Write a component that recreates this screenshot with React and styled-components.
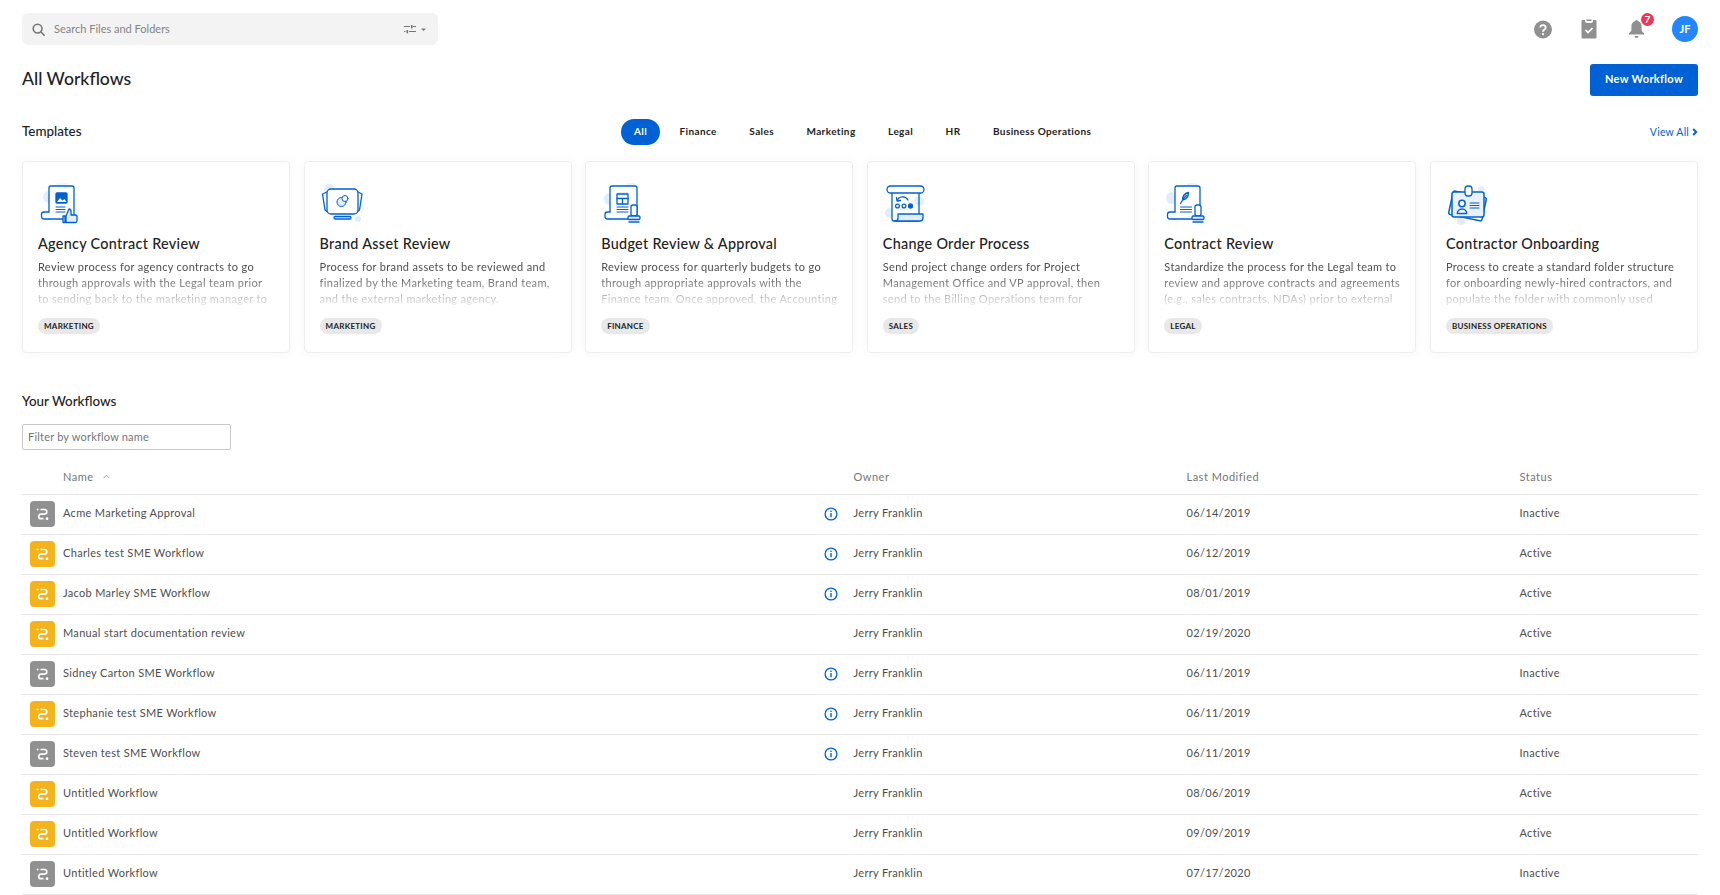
import React from 'react';
import styled, { createGlobalStyle } from 'styled-components';

const BLUE = '#0061d5';
const SPOT = '#e3edf9';

const GlobalStyle = createGlobalStyle`
  html, body {
    margin: 0;
    height: 895px;
    overflow: hidden;
    background: #fff;
    font-family: Lato, "Open Sans", sans-serif;
    color: #222;
  }
  * { box-sizing: border-box; }
`;

const Page = styled.div`
  padding: 13px 22px 0;
`;

const TopBar = styled.div`
  display: flex;
  justify-content: space-between;
  align-items: flex-start;
  height: 32px;
`;

const SearchBox = styled.div`
  display: flex;
  align-items: center;
  width: 416px;
  height: 32px;
  padding: 0 11px 0 10px;
  background: #f3f3f3;
  border-radius: 6px;
`;

const SearchText = styled.span`
  flex: 1;
  margin-left: 9px;
  padding-bottom: 1px;
  font-size: 11px;
  color: #848484;
`;

const TopIcons = styled.div`
  display: flex;
  align-items: center;
  height: 32px;
`;

const IconSlot = styled.div`
  position: relative;
  display: flex;
  justify-content: center;
  width: ${p => p.$w}px;
  margin-left: ${p => p.$gap || 0}px;
`;

const Badge = styled.span`
  position: absolute;
  top: -6px;
  right: -5px;
  width: 13px;
  height: 13px;
  border-radius: 50%;
  background: #ed3757;
  color: #fff;
  font-size: 10px;
  font-weight: 700;
  line-height: 13px;
  text-align: center;
`;

const Avatar = styled.div`
  width: 26px;
  height: 26px;
  margin-left: 23px;
  border-radius: 50%;
  background: #2486fc;
  color: #fff;
  font-size: 11px;
  font-weight: 700;
  line-height: 26px;
  text-align: center;
`;

const TitleRow = styled.div`
  display: flex;
  justify-content: space-between;
  align-items: center;
  margin-top: 19px;
`;

const Title = styled.h1`
  margin: 0;
  padding-bottom: 3px;
  font-size: 17.6px;
  font-weight: 500;
  color: #222;
`;

const PrimaryButton = styled.button`
  width: 108px;
  height: 32px;
  padding: 0 0 3px;
  border: 0;
  border-radius: 3px;
  background: ${BLUE};
  color: #fff;
  font-family: inherit;
  font-size: 11px;
  font-weight: 700;
  letter-spacing: 0.33px;
`;

const TemplatesBar = styled.div`
  display: grid;
  grid-template-columns: 599px 1fr auto;
  align-items: center;
  height: 26px;
  margin-top: 23px;
`;

const SectionTitle = styled.h2`
  margin: 0;
  font-size: 13.4px;
  font-weight: 500;
  color: #222;
`;

const TemplatesTitle = styled(SectionTitle)`
  padding-bottom: 3px;
`;

const Tabs = styled.div`
  display: flex;
  gap: 6.5px;
`;

const Tab = styled.div`
  height: 26px;
  padding: 0 13px;
  border-radius: 13px;
  background: ${p => (p.$active ? BLUE : 'transparent')};
  color: ${p => (p.$active ? '#fff' : '#222')};
  font-size: 10px;
  font-weight: 700;
  letter-spacing: 0.38px;
  line-height: 25px;
`;

const ViewAll = styled.a`
  display: flex;
  align-items: center;
  gap: 3px;
  padding-bottom: 1px;
  color: ${BLUE};
  font-size: 10.5px;
  letter-spacing: 0.2px;
`;

const CardGrid = styled.div`
  display: grid;
  grid-template-columns: repeat(6, 1fr);
  gap: 13.5px;
  margin-top: 16px;
`;

const Card = styled.div`
  height: 192px;
  padding: 21px 15px 0;
  background: #fff;
  border: 1px solid #eee;
  border-radius: 4px;
  box-shadow: 0 0 12px rgba(0, 0, 0, 0.04);
`;

const CardTitle = styled.div`
  margin-top: 9px;
  font-size: 14.4px;
  font-weight: 500;
  letter-spacing: 0.3px;
  line-height: 20px;
  color: #222;
  white-space: nowrap;
`;

const CardText = styled.div`
  height: 48px;
  margin-top: 5px;
  overflow: hidden;
  font-size: 11px;
  letter-spacing: 0.33px;
  line-height: 16px;
  color: #4e4e4e;
  -webkit-mask-image: linear-gradient(to bottom, #000 30%, rgba(0, 0, 0, 0.15) 95%);
  mask-image: linear-gradient(to bottom, #000 30%, rgba(0, 0, 0, 0.15) 95%);
`;

const Tag = styled.span`
  display: inline-block;
  height: 16px;
  margin-top: 11px;
  padding: 0 6px;
  border-radius: 8px;
  background: #e8e8e8;
  font-size: 8px;
  font-weight: 700;
  letter-spacing: 0.27px;
  line-height: 16px;
  color: #222;
`;

const YourTitle = styled(SectionTitle)`
  margin-top: 39px;
  line-height: 18px;
`;

const FilterInput = styled.input`
  display: block;
  width: 209px;
  height: 26px;
  margin: 14px 0 0;
  padding: 0 5px 1px;
  border: 1px solid #c9c9c9;
  border-radius: 2px;
  font-family: inherit;
  font-size: 11px;
  letter-spacing: 0.2px;
  &::placeholder {
    color: #767676;
    opacity: 1;
  }
`;

const Row = styled.div`
  display: grid;
  grid-template-columns: 41px 790.5px 333px 333px 1fr;
  align-items: center;
  height: 40px;
  padding-bottom: 1px;
  border-bottom: 1px solid #e8e8e8;
  font-size: 11px;
  letter-spacing: 0.32px;
  color: #4e4e4e;
`;

const HeadRow = styled(Row)`
  height: 45px;
  padding: 10px 0 1px;
  letter-spacing: 0.5px;
  color: #767676;
`;

const IconCell = styled.div`
  display: flex;
  padding-left: 8px;
`;

const NameCell = styled.div`
  display: flex;
  justify-content: space-between;
  align-items: center;
  padding-right: 16px;
`;

const CellText = styled.span`
  padding-bottom: 3px;
`;

const SortLabel = styled.span`
  display: flex;
  align-items: center;
  gap: 9px;
`;

const WorkflowBadge = styled.div`
  display: flex;
  align-items: center;
  justify-content: center;
  width: 25px;
  height: 26px;
  border-radius: 4px;
  background: ${p => (p.$active ? '#f5b31b' : '#909090')};
`;

/* ---------- drawings ---------- */

const SearchIcon = () => (
  <svg width="13" height="13" viewBox="0 0 13 13" fill="none" stroke="#767676" strokeWidth="1.6">
    <circle cx="5.6" cy="5.6" r="4.4" />
    <path d="M8.8 8.8l3.4 3.4" strokeLinecap="round" />
  </svg>
);

const FilterIcon = () => (
  <svg width="23" height="9" viewBox="0 0 23 9" fill="#777">
    <path d="M0 1h6v1H0zM9 1h3v1H9zM0 6h1.5v1H0zM5 6h7v1H5z" />
    <rect x="7" y="0" width="1.6" height="3.4" />
    <rect x="2.5" y="5" width="1.6" height="3.4" />
    <path d="M17 3.5h5l-2.5 2.5z" />
  </svg>
);

const HelpIcon = () => (
  <svg width="19" height="19" viewBox="0 0 18 18">
    <circle cx="9" cy="9" r="9" fill="#909090" />
    <path d="M6.3 7a2.7 2.4 0 1 1 4.2 2c-1 .7-1.5 1-1.5 2.2" fill="none" stroke="#fff" strokeWidth="1.9" />
    <circle cx="9" cy="13.7" r="1.15" fill="#fff" />
  </svg>
);

const ClipboardIcon = () => (
  <svg width="16" height="20" viewBox="0 0 16 20">
    <path d="M1.5 1H4v1a2 2 0 0 0 2 2h4a2 2 0 0 0 2-2V1h2.500a1 1 0 0 1 1 1v16.500a1 1 0 0 1-1 1h-13a1 1 0 0 1-1-1V2a1 1 0 0 1 1-1z" fill="#909090" />
    <path d="M5.500 0.500h5v1.500h-5z" fill="#909090" />
    <path d="M4.500 11l2.500 2.500 4.500-4.500" fill="none" stroke="#fff" strokeWidth="1.7" />
  </svg>
);

const BellIcon = () => (
  <svg width="17" height="20" viewBox="0 0 17 20" fill="#909090">
    <path d="M8.500 1a1.200 1.200 0 0 1 1.200 1.100c2.600.6 3.900 2.800 3.900 5.400v3.300c0 1.200.9 2.300 2.400 3.500v1.200H1v-1.200c1.500-1.200 2.400-2.300 2.400-3.500V7.500c0-2.600 1.300-4.800 3.900-5.400A1.200 1.200 0 0 1 8.500 1z" />
    <path d="M6.500 17h4a2 2 0 0 1-4 0z" />
  </svg>
);

const ChevronRight = () => (
  <svg width="6" height="8" viewBox="0 0 6 8" fill="none" stroke={BLUE} strokeWidth="2">
    <path d="M1.200 1l3 3-3 3" />
  </svg>
);

const SortCaret = () => (
  <svg width="7" height="5" viewBox="0 0 7 5" fill="none" stroke="#999" strokeWidth="1">
    <path d="M.7 4l2.800-2.800L6.300 4" />
  </svg>
);

const InfoIcon = () => (
  <svg width="14" height="14" viewBox="0 0 14 14">
    <circle cx="7" cy="7" r="5.900" fill="none" stroke={BLUE} strokeWidth="1.300" />
    <rect x="6.300" y="6" width="1.400" height="4.200" fill={BLUE} />
    <rect x="6.300" y="3.600" width="1.400" height="1.400" fill={BLUE} />
  </svg>
);

const WorkflowIcon = () => (
  <svg width="25" height="26" viewBox="0 0 25 26" fill="none" stroke="#fff" strokeWidth="1.700">
    <path d="M10.500 8.500h4a2.300 2.300 0 0 1 0 4.600h-3.500a2.300 2.300 0 0 0 0 4.600h2.500" />
    <circle cx="7.600" cy="8.500" r="1" fill="#fff" stroke="none" />
    <circle cx="17" cy="17.700" r="1.400" fill="#fff" stroke="none" />
  </svg>
);

const IconSvg = styled.svg`
  display: block;
`;

const Art = ({ children }) => (
  <IconSvg width="44" height="42" viewBox="0 0 44 42" fill="none" stroke={BLUE} strokeWidth="1.300" strokeLinejoin="round" strokeLinecap="round">
    {children}
  </IconSvg>
);

// curled document shared by the contract style drawings
const Scroll = ({ x = 11, w = 25, h = 33, curl = 5 }) => (
  <>
    <path d={`M${x} ${3 + h}V5a2 2 0 0 1 2-2h${w - 4}a2 2 0 0 1 2 2v${h - 2}`} fill="#fff" />
    <path d={`M${x + w - 8} ${3 + h}H${x - curl}a2.500 2.500 0 0 1-2.500-2.500v-2a2.500 2.500 0 0 1 2.500-2.500h${curl}`} fill="#fff" />
  </>
);

const Stamp = ({ x = 27 }) => (
  <>
    <rect x={x + 3} y="22" width="6" height="11" rx="2" fill="#fff" />
    <rect x={x} y="33" width="12" height="3.500" rx="1.200" fill={SPOT} />
    <path d={`M${x + 1} 39h10`} />
  </>
);

const Lines = ({ x, y, w, n = 3, gap = 3 }) => (
  <path d={Array.from({ length: n }, (_, i) => `M${x} ${y + i * gap}h${w}`).join('')} strokeWidth="1" />
);

const AgencyArt = () => (
  <Art>
    <circle cx="11" cy="14" r="6" fill={SPOT} stroke="none" />
    <circle cx="24" cy="6" r="8" fill={SPOT} stroke="none" opacity="0.6" />
    <Scroll />
    <rect x="18" y="10" width="11" height="10" rx="1" fill={BLUE} />
    <path d="M19 19l3-4 2.500 2.500 2-1.500 2 3z" fill="#fff" stroke="none" />
    <Lines x={18} y={24} w={9} n={3} gap={2.500} />
    <path d="M27 33v6.500h-2v-6.500zM28 33l3-7c1.500 0 2 1 2 2v4h4.500a1.500 1.500 0 0 1 1.500 2v4a1.500 1.500 0 0 1-1.500 1.500h-9.500z" fill={SPOT} />
  </Art>
);

const BrandArt = () => (
  <Art>
    <circle cx="9" cy="6" r="5" fill={SPOT} stroke="none" />
    <circle cx="38" cy="36" r="3" fill={SPOT} stroke="none" />
    <path d="M7 9L2.500 11l2.500 16 4 3M38 9l4 2-2.500 16-4 3" />
    <rect x="7" y="6" width="31" height="25" rx="4" fill="#fff" />
    <circle cx="21.500" cy="19" r="4.500" fill={SPOT} strokeWidth="1" />
    <circle cx="25" cy="15.500" r="3" fill="#fff" strokeWidth="1" />
    <rect x="14" y="33.500" width="17" height="2.500" rx="1.200" fill={SPOT} />
  </Art>
);

const BudgetArt = () => (
  <Art>
    <circle cx="9" cy="16" r="6" fill={SPOT} stroke="none" />
    <circle cx="30" cy="5" r="6" fill={SPOT} stroke="none" opacity="0.7" />
    <Scroll x={9} w={27} curl={2.500} />
    <rect x="16" y="9" width="11" height="3.500" fill={SPOT} stroke="none" />
    <rect x="16" y="11" width="11" height="10" />
    <path d="M16 15.500h11M21.500 15.500V21" />
    <Lines x={16} y={24} w={11} n={3} gap={2.500} />
    <Stamp />
  </Art>
);

const ChangeArt = () => (
  <Art>
    <circle cx="7" cy="30" r="5" fill={SPOT} stroke="none" />
    <circle cx="36" cy="18" r="5" fill={SPOT} stroke="none" />
    <path d="M9 9v27a2 2 0 0 0 2 2h25" fill="#fff" />
    <path d="M36 9v22" />
    <rect x="4" y="3" width="37" height="7" rx="3.500" fill="#fff" />
    <path d="M12 38a3 3 0 0 0 3-3v-4h25v4a3 3 0 0 1-3 3z" fill={SPOT} />
    <path d="M14 18a6 6 0 0 1 11-1M13.500 14.500l.5 3.500 3.500-.5" />
    <circle cx="14.500" cy="23" r="1.900" />
    <circle cx="21" cy="23" r="1.900" />
    <circle cx="27.500" cy="23" r="2" fill={BLUE} />
  </Art>
);

const ContractArt = () => (
  <Art>
    <circle cx="8" cy="15" r="6" fill={SPOT} stroke="none" />
    <circle cx="28" cy="5" r="6" fill={SPOT} stroke="none" opacity="0.7" />
    <Scroll />
    <path d="M18.500 17c0-4 2-6.500 6-7.500 0 4-1.500 7-6 7.500zM16.500 20.500c1.500-3 3.500-6 6-8" fill={SPOT} />
    <Lines x={16.500} y={24} w={11} n={3} gap={2.500} />
    <Stamp x={28} />
  </Art>
);

const OnboardingArt = () => (
  <Art>
    <circle cx="35" cy="6" r="3" fill={SPOT} stroke="none" />
    <circle cx="15" cy="38" r="4" fill={SPOT} stroke="none" />
    <rect x="4.500" y="11" width="34" height="24" rx="2" transform="rotate(12 21.500 23)" fill="#fff" strokeWidth="1.500" />
    <rect x="6" y="9" width="32" height="25" rx="2" fill="#eaf1fb" strokeWidth="1.500" />
    <rect x="19" y="3" width="7" height="10" rx="3" fill="#fff" />
    <circle cx="16" cy="20.500" r="3.200" fill="#fff" strokeWidth="1.500" />
    <path d="M11.300 30.500a4.700 4.500 0 0 1 9.400 0z" fill="#fff" strokeWidth="1.500" />
    <Lines x={24} y={20} w={9} n={3} gap={2.500} />
  </Art>
);

/* ---------- data ---------- */

const tabs = ['All', 'Finance', 'Sales', 'Marketing', 'Legal', 'HR', 'Business Operations'];

const templates = [
  {
    art: AgencyArt,
    title: 'Agency Contract Review',
    text: 'Review process for agency contracts to go through approvals with the Legal team prior to sending back to the marketing manager to',
    tag: 'MARKETING',
  },
  {
    art: BrandArt,
    title: 'Brand Asset Review',
    text: 'Process for brand assets to be reviewed and finalized by the Marketing team, Brand team, and the external marketing agency.',
    tag: 'MARKETING',
  },
  {
    art: BudgetArt,
    title: 'Budget Review & Approval',
    text: 'Review process for quarterly budgets to go through appropriate approvals with the Finance team. Once approved, the Accounting',
    tag: 'FINANCE',
  },
  {
    art: ChangeArt,
    title: 'Change Order Process',
    text: 'Send project change orders for Project Management Office and VP approval, then send to the Billing Operations team for',
    tag: 'SALES',
  },
  {
    art: ContractArt,
    title: 'Contract Review',
    text: 'Standardize the process for the Legal team to review and approve contracts and agreements (e.g., sales contracts, NDAs) prior to external',
    tag: 'LEGAL',
  },
  {
    art: OnboardingArt,
    title: 'Contractor Onboarding',
    text: 'Process to create a standard folder structure for onboarding newly-hired contractors, and populate the folder with commonly used',
    tag: 'BUSINESS OPERATIONS',
  },
];

const workflows = [
  { name: 'Acme Marketing Approval', info: true, date: '06/14/2019', active: false },
  { name: 'Charles test SME Workflow', info: true, date: '06/12/2019', active: true },
  { name: 'Jacob Marley SME Workflow', info: true, date: '08/01/2019', active: true },
  { name: 'Manual start documentation review', info: false, date: '02/19/2020', active: true },
  { name: 'Sidney Carton SME Workflow', info: true, date: '06/11/2019', active: false },
  { name: 'Stephanie test SME Workflow', info: true, date: '06/11/2019', active: true },
  { name: 'Steven test SME Workflow', info: true, date: '06/11/2019', active: false },
  { name: 'Untitled Workflow', info: false, date: '08/06/2019', active: true },
  { name: 'Untitled Workflow', info: false, date: '09/09/2019', active: true },
  { name: 'Untitled Workflow', info: false, date: '07/17/2020', active: false },
];

function App() {
  return (
    <Page>
      <GlobalStyle />
      <TopBar>
        <SearchBox>
          <SearchIcon />
          <SearchText>Search Files and Folders</SearchText>
          <FilterIcon />
        </SearchBox>
        <TopIcons>
          <IconSlot $w={18}><HelpIcon /></IconSlot>
          <IconSlot $w={16} $gap={29}><ClipboardIcon /></IconSlot>
          <IconSlot $w={26} $gap={26}>
            <BellIcon />
            <Badge>7</Badge>
          </IconSlot>
          <Avatar>JF</Avatar>
        </TopIcons>
      </TopBar>

      <TitleRow>
        <Title>All Workflows</Title>
        <PrimaryButton>New Workflow</PrimaryButton>
      </TitleRow>

      <TemplatesBar>
        <TemplatesTitle>Templates</TemplatesTitle>
        <Tabs>
          {tabs.map((tab, i) => (
            <Tab key={tab} $active={i === 0}>{tab}</Tab>
          ))}
        </Tabs>
        <ViewAll>View All <ChevronRight /></ViewAll>
      </TemplatesBar>

      <CardGrid>
        {templates.map(t => (
          <Card key={t.title}>
            <t.art />
            <CardTitle>{t.title}</CardTitle>
            <CardText>{t.text}</CardText>
            <Tag>{t.tag}</Tag>
          </Card>
        ))}
      </CardGrid>

      <YourTitle>Your Workflows</YourTitle>
      <FilterInput placeholder="Filter by workflow name" />

      <HeadRow>
        <span />
        <SortLabel>Name <SortCaret /></SortLabel>
        <span>Owner</span>
        <span>Last Modified</span>
        <span>Status</span>
      </HeadRow>
      {workflows.map(w => (
        <Row key={w.name + w.date}>
          <IconCell>
            <WorkflowBadge $active={w.active}><WorkflowIcon /></WorkflowBadge>
          </IconCell>
          <NameCell>
            <CellText>{w.name}</CellText>
            {w.info && <InfoIcon />}
          </NameCell>
          <CellText>Jerry Franklin</CellText>
          <CellText>{w.date}</CellText>
          <CellText>{w.active ? 'Active' : 'Inactive'}</CellText>
        </Row>
      ))}
    </Page>
  );
}

export default App;
